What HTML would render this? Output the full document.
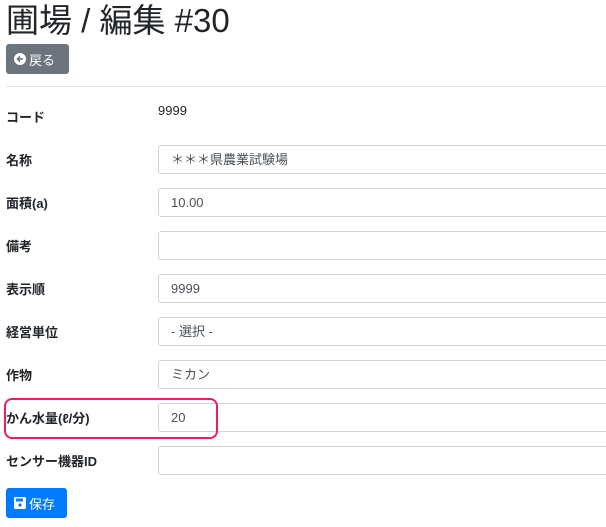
<!DOCTYPE html>
<html><head><meta charset="utf-8"><style>
body{margin:0;width:606px;height:527px;overflow:hidden;background:#fff;font-family:"Liberation Sans","Noto Sans CJK JP",sans-serif;color:#212529;position:relative}
h1{position:absolute;left:6px;top:0;margin:0;font-size:33px;font-weight:400;line-height:42px}
.btn{position:absolute;left:6px;border-radius:3px;color:#fff;font-size:13px;display:flex;align-items:center;padding-left:8px;box-sizing:border-box}
.back{top:44px;width:63px;height:30px;background:#6c757d}
.save{top:488px;width:61px;height:30px;background:#007bff}
hr{position:absolute;left:6px;top:86px;width:600px;margin:0;border:0;border-top:1px solid #e5e5e5}
.lbl{position:absolute;left:6px;font-size:13px;font-weight:bold;line-height:16px}
.inp{position:absolute;left:158px;width:460px;height:29px;border:1px solid #ced4da;border-radius:3px;box-sizing:border-box;font-size:13px;padding-left:12px;line-height:27px;color:#495057}
.hl{position:absolute;left:4px;top:398px;width:214px;height:41px;border:2px solid #e91e63;border-radius:8px;box-sizing:border-box}
</style></head><body>
<h1>圃場 / 編集 #30</h1>
<div class="btn back"><svg width="12" height="12" viewBox="0 0 12 12" style="margin-right:3px"><circle cx="6" cy="6" r="6" fill="#fff"/><path d="M9 6H4M6 3.5L3.5 6 6 8.5" stroke="#6c757d" stroke-width="1.6" fill="none"/></svg>戻る</div>
<hr>
<div class="lbl" style="top:110px">コード</div><div style="position:absolute;left:158px;top:103px;font-size:13px">9999</div>
<div class="lbl" style="top:153px">名称</div><div class="inp" style="top:145px">＊＊＊県農業試験場</div>
<div class="lbl" style="top:196px">面積(a)</div><div class="inp" style="top:188px">10.00</div>
<div class="lbl" style="top:239px">備考</div><div class="inp" style="top:231px"></div>
<div class="lbl" style="top:282px">表示順</div><div class="inp" style="top:274px">9999</div>
<div class="lbl" style="top:325px">経営単位</div><div class="inp" style="top:317px">- 選択 -</div>
<div class="lbl" style="top:368px">作物</div><div class="inp" style="top:360px">ミカン</div>
<div class="lbl" style="top:411px">かん水量(ℓ/分)</div><div class="inp" style="top:403px">20</div>
<div class="lbl" style="top:454px">センサー機器ID</div><div class="inp" style="top:446px"></div>
<div class="hl"></div>
<div class="btn save"><svg width="12" height="12" viewBox="0 0 12 12" style="margin-right:3px"><rect x="0" y="0" width="12" height="12" rx="1.5" fill="#fff"/><rect x="2" y="1.5" width="7" height="3" fill="#007bff"/><circle cx="6" cy="8" r="1.6" fill="#007bff"/></svg>保存</div>
</body></html>
